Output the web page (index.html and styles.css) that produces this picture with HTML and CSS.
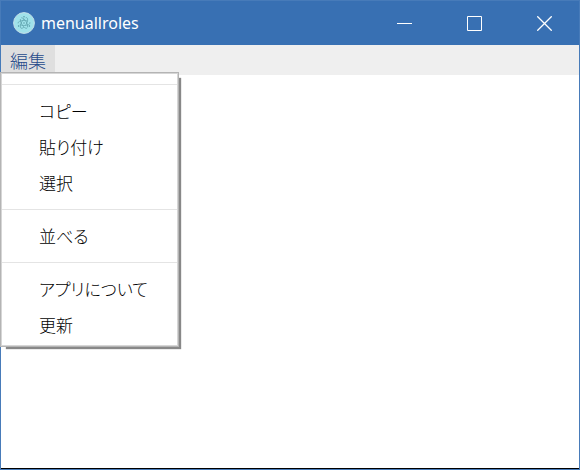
FILE: index.html
```
<!DOCTYPE html>
<html lang="ja">
<head>
  <meta charset="UTF-8">
  <meta name="viewport" content="width=device-width, initial-scale=1.0">
  <title>menuallroles</title>
  <link rel="stylesheet" href="styles.css">
</head>
<body>
  <div class="window">
    <header class="titlebar">
      <svg class="app-icon" viewBox="0 0 22 22" aria-hidden="true">
        <circle cx="11" cy="11" r="10.4" fill="#a0e2ea" stroke="#c3dfe8"/>
        <g fill="none" stroke="#5fa3ae" stroke-width="0.7">
          <ellipse cx="11" cy="11" rx="6" ry="2.5" stroke-dasharray="11 2"/>
          <ellipse cx="11" cy="11" rx="6" ry="2.5" transform="rotate(60 11 11)" stroke-dasharray="12 2"/>
          <ellipse cx="11" cy="11" rx="6" ry="2.5" transform="rotate(120 11 11)" stroke-dasharray="10 2"/>
        </g>
        <g fill="#4f929f">
          <circle cx="11" cy="11" r="0.7"/>
          <circle cx="11" cy="4.8" r="0.7"/>
          <circle cx="5.6" cy="14" r="0.7"/>
          <circle cx="16.4" cy="14" r="0.7"/>
        </g>
      </svg>
      <h1 class="title">menuallroles</h1>
      <div class="controls">
        <button type="button" class="control" aria-label="最小化">
          <svg viewBox="0 0 15 15"><path d="M0 7.5H15"/></svg>
        </button>
        <button type="button" class="control" aria-label="最大化">
          <svg viewBox="0 0 15 15"><path d="M.5 .5H14.5V14.5H.5Z"/></svg>
        </button>
        <button type="button" class="control" aria-label="閉じる">
          <svg viewBox="0 0 15 15"><path d="M.3 .3L14.7 14.7M14.7 .3L.3 14.7" stroke-width="1.3"/></svg>
        </button>
      </div>
    </header>

    <nav class="menubar">
      <button type="button" class="menu-button" aria-expanded="true">編集</button>
      <ul class="submenu show">
        <li class="separator"></li>
        <li><button type="button">コピー</button></li>
        <li><button type="button">貼り付け</button></li>
        <li><button type="button">選択</button></li>
        <li class="separator"></li>
        <li><button type="button">並べる</button></li>
        <li class="separator"></li>
        <li><button type="button">アプリについて</button></li>
        <li><button type="button">更新</button></li>
      </ul>
    </nav>

    <main class="content"></main>
  </div>

  <script>
    const menuButton = document.querySelector('.menu-button');
    const submenu = document.querySelector('.submenu');

    function setOpen(open) {
      submenu.classList.toggle('show', open);
      menuButton.setAttribute('aria-expanded', open);
    }

    menuButton.addEventListener('click', () => {
      setOpen(!submenu.classList.contains('show'));
    });

    // メニューの外をクリックしたら閉じる
    document.addEventListener('click', (e) => {
      if (!e.target.closest('.menubar')) {
        setOpen(false);
      }
    });
  </script>
</body>
</html>
```
FILE: styles.css
```
* {
  box-sizing: border-box;
}

body {
  margin: 0;
  font-family: "Noto Sans", "Noto Sans CJK JP", sans-serif;
  font-size: 18px;
}

button {
  border: 0;
  background: none;
  font: inherit;
}

/* ウィンドウ枠 */
.window {
  display: flex;
  flex-direction: column;
  min-height: 100vh;
  border: 1px solid #477bb9;
  background-color: #fff;
}

/* タイトルバー */
.titlebar {
  display: flex;
  align-items: center;
  height: 44px;
  padding-left: 12px;
  background-color: #3870b3;
  color: #fff;
}

.app-icon {
  width: 22px;
  height: 22px;
  margin-right: 6px;
}

.title {
  margin: 0;
  font-size: 16px;
  font-weight: 400;
}

.controls {
  display: flex;
  align-self: stretch;
  margin-left: auto;
}

.control {
  display: flex;
  align-items: center;
  justify-content: center;
  width: 70px;
  padding: 0;
}

.control:hover {
  background-color: #4d82c0;
}

.control svg {
  width: 15px;
  height: 15px;
  fill: none;
  stroke: #fff;
  stroke-width: 1;
}

/* メニューバー */
.menubar {
  position: relative;
  display: flex;
  height: 30px;
  background-color: #efefef;
}

.menu-button {
  padding: 0 9px;
  line-height: 32px;
  color: #264a8a;
  font-weight: 300;
}

.menu-button[aria-expanded="true"] {
  background-color: #dfdfdf;
}

/* ドロップダウン */
.submenu {
  display: none;
  position: absolute;
  top: 27px;
  left: -1px;
  z-index: 10;
  width: 179px;
  margin: 0;
  padding: 4px 1px 2px;
  border: 1px solid #b4b4b4;
  background-color: #fff;
  box-shadow: inset 0 0 0 1px #d6d6d6, 4px 4px 1px -2px #888;
  list-style: none;
  font-size: 17px;
  font-feature-settings: "palt";
}

.submenu.show {
  display: block;
}

.submenu button {
  display: block;
  width: 100%;
  height: 36px;
  padding: 0 0 0 37px;
  line-height: 36px;
  color: #000;
  font-weight: 300;
  text-align: left;
}

.submenu button:hover {
  background-color: #e5f1fb;
}

.separator {
  height: 1px;
  margin: 7px 0 9px;
  background-color: #e4e4e4;
}

.content {
  flex: 1;
  border-bottom: 1px solid #000;
}
```
